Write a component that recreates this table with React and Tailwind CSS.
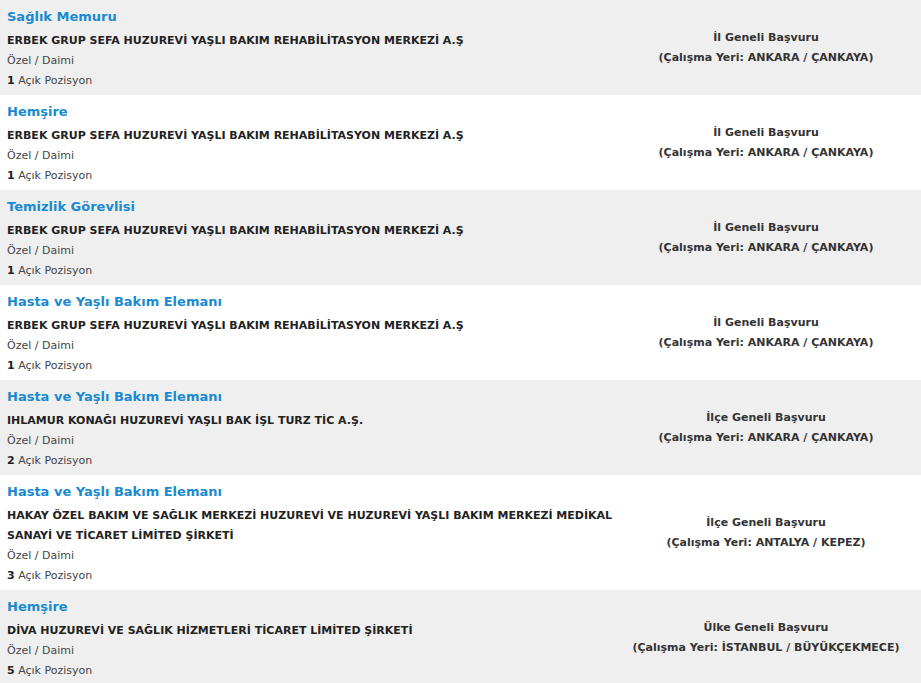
import React from "react";

const jobs = [
  {
    title: "Sağlık Memuru",
    company: "ERBEK GRUP SEFA HUZUREVİ YAŞLI BAKIM REHABİLİTASYON MERKEZİ A.Ş",
    count: 1,
    scope: "İl Geneli Başvuru",
    place: "ANKARA / ÇANKAYA",
  },
  {
    title: "Hemşire",
    company: "ERBEK GRUP SEFA HUZUREVİ YAŞLI BAKIM REHABİLİTASYON MERKEZİ A.Ş",
    count: 1,
    scope: "İl Geneli Başvuru",
    place: "ANKARA / ÇANKAYA",
  },
  {
    title: "Temizlik Görevlisi",
    company: "ERBEK GRUP SEFA HUZUREVİ YAŞLI BAKIM REHABİLİTASYON MERKEZİ A.Ş",
    count: 1,
    scope: "İl Geneli Başvuru",
    place: "ANKARA / ÇANKAYA",
  },
  {
    title: "Hasta ve Yaşlı Bakım Elemanı",
    company: "ERBEK GRUP SEFA HUZUREVİ YAŞLI BAKIM REHABİLİTASYON MERKEZİ A.Ş",
    count: 1,
    scope: "İl Geneli Başvuru",
    place: "ANKARA / ÇANKAYA",
  },
  {
    title: "Hasta ve Yaşlı Bakım Elemanı",
    company: "IHLAMUR KONAĞI HUZUREVİ YAŞLI BAK İŞL TURZ TİC A.Ş.",
    count: 2,
    scope: "İlçe Geneli Başvuru",
    place: "ANKARA / ÇANKAYA",
  },
  {
    title: "Hasta ve Yaşlı Bakım Elemanı",
    company:
      "HAKAY ÖZEL BAKIM VE SAĞLIK MERKEZİ HUZUREVİ VE HUZUREVİ YAŞLI BAKIM MERKEZİ MEDİKAL SANAYİ VE TİCARET LİMİTED ŞİRKETİ",
    count: 3,
    scope: "İlçe Geneli Başvuru",
    place: "ANTALYA / KEPEZ",
  },
  {
    title: "Hemşire",
    company: "DİVA HUZUREVİ VE SAĞLIK HİZMETLERİ TİCARET LİMİTED ŞİRKETİ",
    count: 5,
    scope: "Ülke Geneli Başvuru",
    place: "İSTANBUL / BÜYÜKÇEKMECE",
  },
];

function JobRow({ job, odd }) {
  return (
    <div
      className={`grid grid-cols-[620px_1fr] ${odd ? "bg-[#efefef]" : "bg-white"}`}
    >
      <div className="pl-[7px] pt-[4px] pb-[4px]">
        <div className="h-[27px] leading-[26px] text-[13px] font-bold text-[#1a8ad0]">
          {job.title}
        </div>
        <div className="leading-[20px] text-[11px] font-bold text-[#222]">
          {job.company}
        </div>
        <div className="h-[20px] leading-[20px] text-[11px] text-[#444]">
          Özel / Daimi
        </div>
        <div className="h-[20px] leading-[20px] text-[11px] text-[#444]">
          <span className="font-bold text-[#222]">{job.count}</span> Açık Pozisyon
        </div>
      </div>
      <div className="flex flex-col items-center justify-center pr-[9px] text-center text-[11px] font-bold leading-[20px] text-[#333]">
        <div>{job.scope}</div>
        <div>(Çalışma Yeri: {job.place})</div>
      </div>
    </div>
  );
}

export default function App() {
  return (
    <div
      className="w-[921px] h-[683px] overflow-hidden bg-white"
      style={{ fontFamily: '"DejaVu Sans", Verdana, sans-serif' }}
    >
      {jobs.map((job, i) => (
        <JobRow key={i} job={job} odd={i % 2 === 0} />
      ))}
    </div>
  );
}
